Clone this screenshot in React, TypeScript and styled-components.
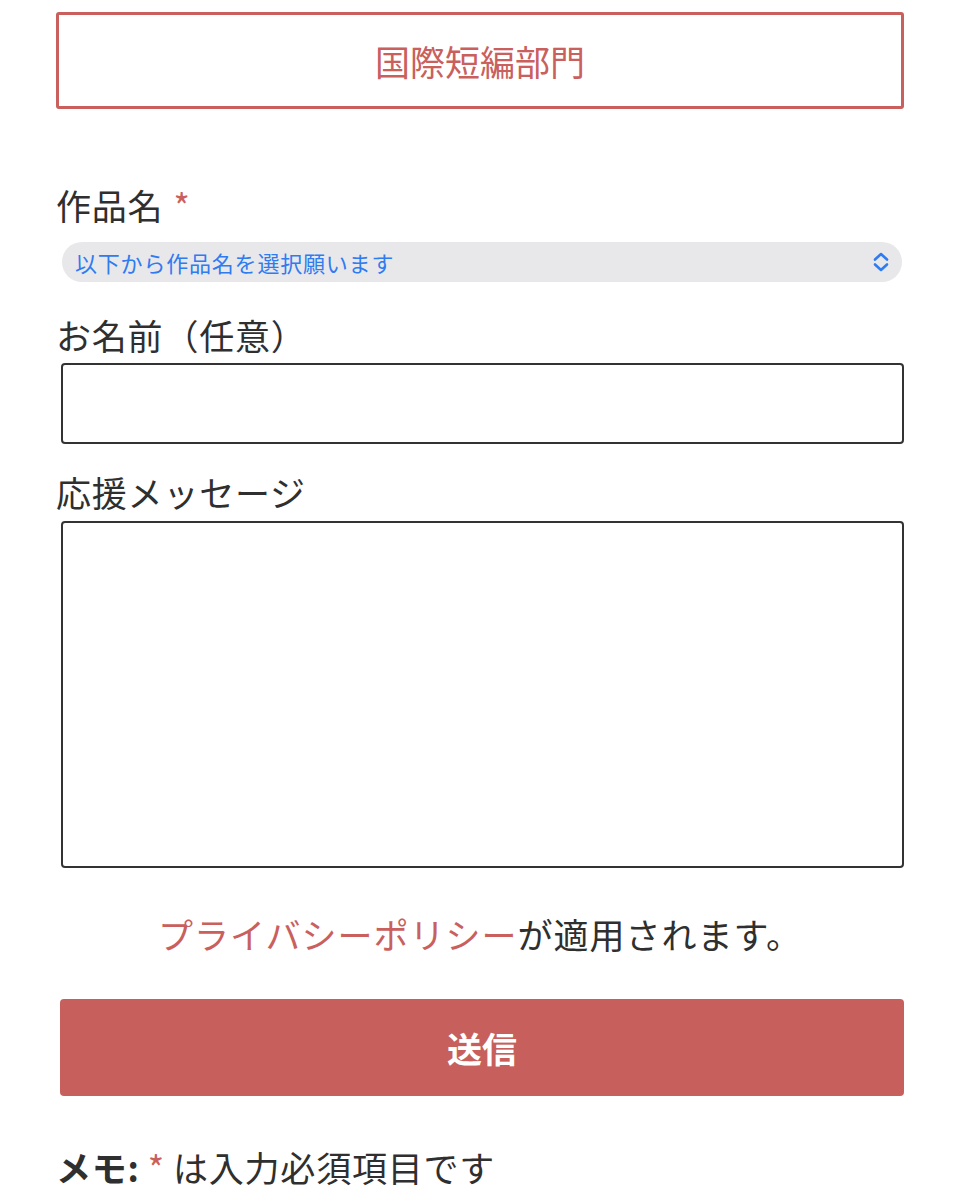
import React from 'react'
import styled, { createGlobalStyle } from 'styled-components'

const RED = '#c9605d'
const INK = '#2f2f2f'

const GlobalStyle = createGlobalStyle`
    html, body {
        margin: 0;
        padding: 0;
        background: #ffffff;
    }
    body {
        font-family: "Noto Sans CJK JP", "Noto Sans", sans-serif;
        color: ${INK};
    }
`

const Page = styled.div`
    width: 960px;
    box-sizing: border-box;
    padding: 12px 56px 0 56px;
    display: flex;
    flex-direction: column;
`

const CategoryBox = styled.div`
    height: 97px;
    box-sizing: border-box;
    border: 3px solid ${RED};
    border-radius: 3px;
    display: flex;
    align-items: center;
    justify-content: center;
    color: ${RED};
    font-size: 35px;
    margin-bottom: 72px;
`

type LabelProps = {
    $gap?: number
}

const Label = styled.label<LabelProps>`
    display: block;
    font-size: 35px;
    line-height: 48px;
    letter-spacing: 0.8px;
    margin-left: 0;
    margin-bottom: ${p => p.$gap ?? 4}px;
`

const Required = styled.span`
    color: ${RED};
    margin-left: 10px;
`

const SelectBox = styled.div`
    height: 40px;
    margin: 0 2px 29px 6px;
    border-radius: 20px;
    background: #e8e8eb;
    display: flex;
    align-items: center;
    justify-content: space-between;
    padding: 0 12px 0 13px;
    color: #2f7bf0;
    font-size: 22px;
    letter-spacing: 0.8px;
`

const TextInput = styled.div`
    height: 81px;
    box-sizing: border-box;
    margin: 0 0 24px 5px;
    border: 2px solid #333;
    border-radius: 4px;
`

const TextArea = styled.div`
    height: 347px;
    box-sizing: border-box;
    margin: 0 0 42px 5px;
    border: 2px solid #333;
    border-radius: 4px;
`

const Notice = styled.p`
    margin: 0 0 41px 0;
    text-align: center;
    font-size: 35px;
    line-height: 48px;
    letter-spacing: 1px;
`

const PolicyLink = styled.span`
    color: ${RED};
`

const SubmitButton = styled.button`
    height: 97px;
    margin: 0 0 47px 4px;
    border: none;
    border-radius: 4px;
    background: #c75f5c;
    color: #ffffff;
    font-family: inherit;
    font-size: 35px;
    font-weight: 700;
`

const Memo = styled.p`
    margin: 0;
    font-size: 35px;
    line-height: 48px;
    letter-spacing: 0.8px;
`

const MemoKey = styled.strong`
    font-weight: 700;
`

const MemoStar = styled.span`
    color: ${RED};
    margin: 0 8px 0 8px;
`

const Chevrons = () => (
    <svg width="18" height="24" viewBox="0 0 18 24" fill="none">
        <path d="M3 9.5L9 4l6 5.5" stroke="#2f7bf0" strokeWidth="2.6" strokeLinecap="round" strokeLinejoin="round" />
        <path d="M3 14.5L9 20l6-5.5" stroke="#2f7bf0" strokeWidth="2.6" strokeLinecap="round" strokeLinejoin="round" />
    </svg>
)

const App = () => (
    <>
        <GlobalStyle />
        <Page>
            <CategoryBox>国際短編部門</CategoryBox>

            <Label $gap={13}>
                作品名<Required>*</Required>
            </Label>
            <SelectBox>
                <span>以下から作品名を選択願います</span>
                <Chevrons />
            </SelectBox>

            <Label>お名前（任意）</Label>
            <TextInput />

            <Label $gap={5}>応援メッセージ</Label>
            <TextArea />

            <Notice>
                <PolicyLink>プライバシーポリシー</PolicyLink>が適用されます。
            </Notice>

            <SubmitButton>送信</SubmitButton>

            <Memo>
                <MemoKey>メモ:</MemoKey>
                <MemoStar>*</MemoStar>は入力必須項目です
            </Memo>
        </Page>
    </>
)

export default App
